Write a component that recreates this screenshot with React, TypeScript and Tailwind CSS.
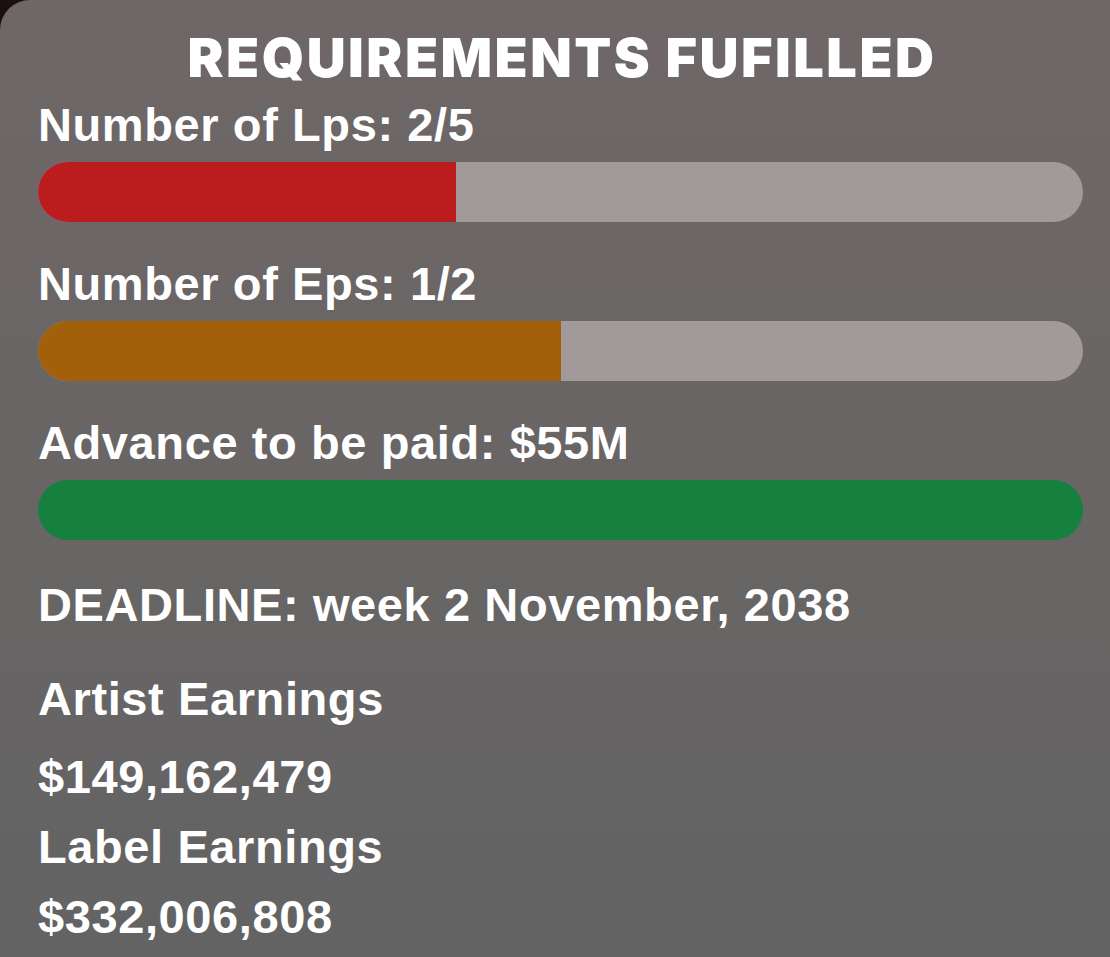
import React from "react";

type Requirement = {
  label: string;
  progress: number;
  color: string;
};

const requirements: Requirement[] = [
  { label: "Number of Lps: 2/5", progress: 0.4, color: "bg-[#bb1d1f]" },
  { label: "Number of Eps: 1/2", progress: 0.5, color: "bg-[#a2600a]" },
  { label: "Advance to be paid: $55M", progress: 1, color: "bg-[#16803f]" },
];

const ProgressBar: React.FC<{ progress: number; color: string }> = ({
  progress,
  color,
}) => {
  return (
    <div className="h-[60px] w-full rounded-full bg-[#a29a9a] overflow-hidden flex">
      <div
        className={`h-full ${color}`}
        style={{ width: `${progress * 100}%` }}
      />
    </div>
  );
};

const Label: React.FC<{ children: React.ReactNode; className?: string }> = ({
  children,
  className = "",
}) => (
  <div
    className={`text-white font-bold text-[47px] leading-none tracking-[0.6px] font-['Liberation_Sans',sans-serif] ${className}`}
  >
    {children}
  </div>
);

export default function App() {
  return (
    <div className="w-[1110px] h-[957px] bg-[#1a1010] overflow-hidden">
      <div className="w-full h-full rounded-tl-[30px] bg-gradient-to-b from-[#6f6767] to-[#636363] pl-[38px] pr-[27px] pt-[31px]">
        <h1 className="text-center text-white font-black text-[54px] leading-none tracking-[2.5px] font-['Inter',sans-serif] pl-[3px]">
          REQUIREMENTS FUFILLED
        </h1>

        <div className="mt-[16px] flex flex-col">
          {requirements.map((req, i) => (
            <div key={i} className={i === 0 ? "" : "mt-[38px]"}>
              <Label>{req.label}</Label>
              <div className="mt-[14px]">
                <ProgressBar progress={req.progress} color={req.color} />
              </div>
            </div>
          ))}
        </div>

        <Label className="mt-[41px]">DEADLINE: week 2 November, 2038</Label>

        <div className="mt-[47px] flex flex-col gap-[23px]">
          <Label className="mb-[8px]">Artist Earnings</Label>
          <Label>$149,162,479</Label>
          <Label>Label Earnings</Label>
          <Label>$332,006,808</Label>
        </div>
      </div>
    </div>
  );
}
